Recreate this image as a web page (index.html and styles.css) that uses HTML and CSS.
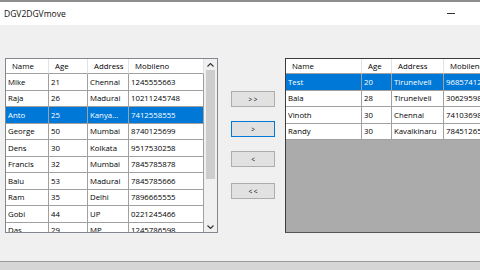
FILE: index.html
```html
<!DOCTYPE html>
<html>

<head>
  <title>DGV2DGVmove</title>
  <link rel="stylesheet" href="styles.css">
</head>

<body>
  <div class="window">
    <div class="titlebar">
      <span class="title">DGV2DGVmove</span>
      <span class="min-btn"></span>
    </div>

    <div class="form-body">
      <!-- left grid -->
      <div class="grid grid-left">
        <div class="rows">
          <div class="row head">
            <div class="cell">Name</div>
            <div class="cell">Age</div>
            <div class="cell">Address</div>
            <div class="cell">Mobileno</div>
          </div>
          <div class="row"><div class="cell">Mike</div><div class="cell">21</div><div class="cell">Chennai</div><div class="cell">1245555663</div></div>
          <div class="row"><div class="cell">Raja</div><div class="cell">26</div><div class="cell">Madurai</div><div class="cell">10211245748</div></div>
          <div class="row selected"><div class="cell">Anto</div><div class="cell">25</div><div class="cell">Kanya...</div><div class="cell">7412558555</div></div>
          <div class="row"><div class="cell">George</div><div class="cell">50</div><div class="cell">Mumbai</div><div class="cell">8740125699</div></div>
          <div class="row"><div class="cell">Dens</div><div class="cell">30</div><div class="cell">Kolkata</div><div class="cell">9517530258</div></div>
          <div class="row"><div class="cell">Francis</div><div class="cell">32</div><div class="cell">Mumbai</div><div class="cell">7845785878</div></div>
          <div class="row"><div class="cell">Balu</div><div class="cell">53</div><div class="cell">Madurai</div><div class="cell">7845785666</div></div>
          <div class="row"><div class="cell">Ram</div><div class="cell">35</div><div class="cell">Delhi</div><div class="cell">7896665555</div></div>
          <div class="row"><div class="cell">Gobi</div><div class="cell">44</div><div class="cell">UP</div><div class="cell">0221245466</div></div>
          <div class="row"><div class="cell">Das</div><div class="cell">29</div><div class="cell">MP</div><div class="cell">1245786598</div></div>
        </div>
        <div class="vscroll">
          <div class="arrow">
            <svg width="7" height="4" viewBox="0 0 7 4"><path d="M0.5 3.5 L3.5 0.5 L6.5 3.5" fill="none" stroke="#333" stroke-width="1.1"/></svg>
          </div>
          <div class="track"><div class="thumb"></div></div>
          <div class="arrow">
            <svg width="7" height="4" viewBox="0 0 7 4"><path d="M0.5 0.5 L3.5 3.5 L6.5 0.5" fill="none" stroke="#333" stroke-width="1.1"/></svg>
          </div>
        </div>
      </div>

      <!-- move buttons -->
      <div class="buttons">
        <button class="btn">&gt; &gt;</button>
        <button class="btn focused">&gt;</button>
        <button class="btn">&lt;</button>
        <button class="btn last">&lt; &lt;</button>
      </div>

      <!-- right grid -->
      <div class="grid grid-right">
        <div class="rows">
          <div class="row head">
            <div class="cell">Name</div>
            <div class="cell">Age</div>
            <div class="cell">Address</div>
            <div class="cell">Mobileno</div>
          </div>
          <div class="row selected"><div class="cell">Test</div><div class="cell">20</div><div class="cell">Tirunelveli</div><div class="cell">9685741236</div></div>
          <div class="row"><div class="cell">Bala</div><div class="cell">28</div><div class="cell">Tirunelveli</div><div class="cell">3062959874</div></div>
          <div class="row"><div class="cell">Vinoth</div><div class="cell">30</div><div class="cell">Chennai</div><div class="cell">7410369852</div></div>
          <div class="row"><div class="cell">Randy</div><div class="cell">30</div><div class="cell">Kavalkinaru</div><div class="cell">7845126598</div></div>
        </div>
      </div>
    </div>
  </div>
</body>

</html>
```

FILE: styles.css
```css
/* form window */
body {
  margin: 0;
  padding: 0;
  background-color: #d6d6d6;
  font-family: "Open Sans", "Noto Sans", sans-serif;
  overflow: hidden;
}

.window {
  width: 480px;
  height: 262px;
  background-color: #f0f0f0;
  border-top: 2px solid #8e8e8e;
  border-bottom: 1px solid #9c9c9c;
  box-sizing: border-box;
  overflow: hidden;
}

.titlebar {
  display: flex;
  align-items: center;
  justify-content: space-between;
  height: 23px;
  background-color: #fff;
  padding: 0 25px 0 4px;
}

.title {
  font-size: 8.5px;
  color: #111;
}

.min-btn {
  width: 8px;
  height: 1px;
  background-color: #333;
}

.form-body {
  display: flex;
  align-items: flex-start;
  padding: 33px 0 0 5px;
}

/* grids */
.grid {
  display: flex;
  flex: none;
  height: 175px;
  box-sizing: border-box;
  overflow: hidden;
  font-size: 7.8px;
  color: #000;
}

.grid-left {
  width: 213px;
  border: 1px solid #828790;
  background-color: #fff;
}

.grid-right {
  width: 210px;
  margin-left: 10px;
  border-top: 1px solid #3c3c3c;
  border-left: 1px solid #3c3c3c;
  border-bottom: 1px solid #555;
  background-color: #ababab;
}

.rows {
  flex: none;
}

.row {
  display: grid;
  height: 16.5px;
  background-color: #fff;
}

.grid-left .row {
  grid-template-columns: 43px 39px 41px 75px;
}

.grid-right .row {
  grid-template-columns: 76px 30px 52px 70px;
}

.row.head {
  height: 15px;
}

.cell {
  display: flex;
  align-items: center;
  padding-left: 2px;
  border-right: 1px solid #a0a0a0;
  border-bottom: 1px solid #a0a0a0;
  box-sizing: border-box;
  white-space: nowrap;
  overflow: hidden;
}

.head .cell {
  padding-left: 6px;
  border-right-color: #e3e3e3;
}

.selected {
  background-color: #0078d7;
  color: #fff;
}

/* scrollbar */
.vscroll {
  display: flex;
  flex: none;
  flex-direction: column;
  width: 13px;
  background-color: #f0f0f0;
}

.arrow {
  display: flex;
  align-items: center;
  justify-content: center;
  height: 11px;
}

.track {
  flex: 1;
  padding: 0 2px;
}

.thumb {
  height: 109px;
  background-color: #cdcdcd;
}

/* buttons */
.buttons {
  display: flex;
  flex: none;
  flex-direction: column;
  gap: 14px;
  margin: 33px 0 0 13px;
}

.btn {
  width: 44px;
  height: 16px;
  padding: 0;
  background-color: #e1e1e1;
  border: 1px solid #adadad;
  font-family: "Open Sans", "Noto Sans", sans-serif;
  font-size: 6.5px;
  color: #000;
}

.btn.focused {
  border-color: #0078d7;
}

.btn.last {
  margin-top: 2px;
}
```
